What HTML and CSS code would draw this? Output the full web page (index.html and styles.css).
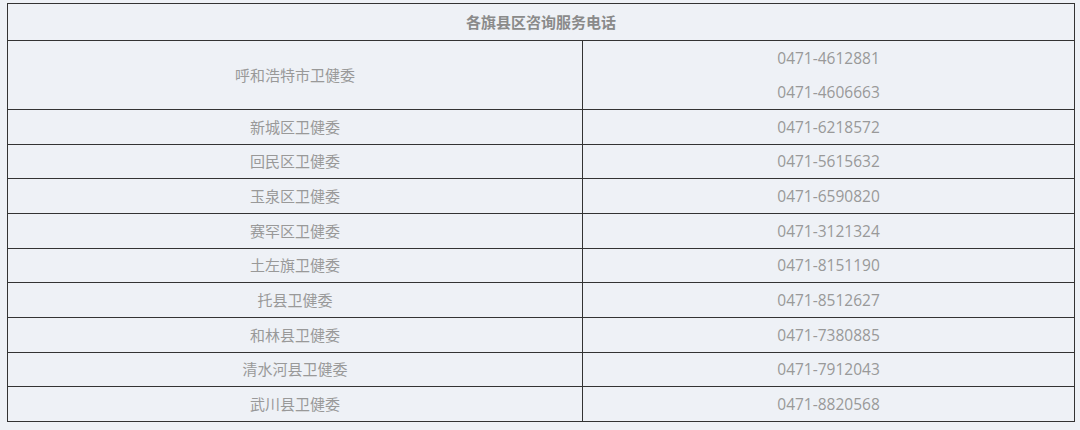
FILE: index.html
```html
<!DOCTYPE html>
<html lang="zh">
<head>
<meta charset="utf-8">
<link rel="stylesheet" href="styles.css">
</head>
<body>
<table class="phones">
  <colgroup><col class="c-name"><col class="c-tel"></colgroup>
  <thead>
    <tr class="head"><th colspan="2">各旗县区咨询服务电话</th></tr>
  </thead>
  <tbody>
    <tr class="double"><td>呼和浩特市卫健委</td><td class="tel"><div class="line">0471-4612881</div><div class="line">0471-4606663</div></td></tr>
    <tr><td>新城区卫健委</td><td class="tel">0471-6218572</td></tr>
    <tr><td>回民区卫健委</td><td class="tel">0471-5615632</td></tr>
    <tr><td>玉泉区卫健委</td><td class="tel">0471-6590820</td></tr>
    <tr><td>赛罕区卫健委</td><td class="tel">0471-3121324</td></tr>
    <tr><td>土左旗卫健委</td><td class="tel">0471-8151190</td></tr>
    <tr><td>托县卫健委</td><td class="tel">0471-8512627</td></tr>
    <tr><td>和林县卫健委</td><td class="tel">0471-7380885</td></tr>
    <tr><td>清水河县卫健委</td><td class="tel">0471-7912043</td></tr>
    <tr><td>武川县卫健委</td><td class="tel">0471-8820568</td></tr>
  </tbody>
</table>
</body>
</html>
```
FILE: styles.css
```css
html, body {
  margin: 0;
  background: #eef1f6;
}
body {
  padding: 3px 0 0 7px;
  font-family: "Noto Sans CJK SC", "Noto Sans", sans-serif;
  font-size: 15px;
  color: #999;
}
.phones {
  border-collapse: collapse;
  width: 1067px;
  table-layout: fixed;
  border: 1px solid #555;
}
.c-name { width: 575px; }
.c-tel { width: 492px; }
.phones th, .phones td {
  border: 1px solid #333;
  text-align: center;
  vertical-align: middle;
  padding: 0;
  height: 33.67px;
  line-height: 20px;
}
.phones th {
  height: 36px;
  font-weight: bold;
  color: #8a8a8a;
}
.phones td.tel {
  font-family: "Open Sans", "Noto Sans CJK SC", sans-serif;
  font-size: 15.5px;
}
.double td { height: 68px; }
.line {
  line-height: 34px;
}
```
